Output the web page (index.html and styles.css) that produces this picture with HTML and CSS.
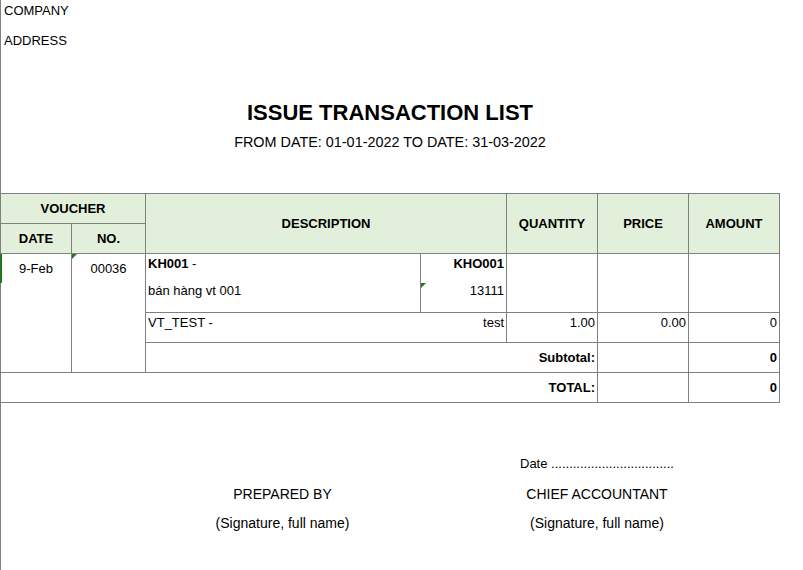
FILE: index.html
```html
<!DOCTYPE html>
<html>
<head>
<meta charset="utf-8">
<link rel="stylesheet" href="styles.css">
</head>
<body>
<div class="page">
  <div class="org">COMPANY</div>
  <div class="org">ADDRESS</div>
  <h1 class="title">ISSUE TRANSACTION LIST</h1>
  <div class="period">FROM DATE: 01-01-2022 TO DATE: 31-03-2022</div>

  <table class="sheet">
    <colgroup>
      <col class="c-date"><col class="c-no"><col class="c-desc"><col class="c-code"><col class="c-num"><col class="c-num"><col class="c-num">
    </colgroup>
    <tr class="r30">
      <th colspan="2">VOUCHER</th>
      <th colspan="2" rowspan="2">DESCRIPTION</th>
      <th rowspan="2">QUANTITY</th>
      <th rowspan="2">PRICE</th>
      <th rowspan="2">AMOUNT</th>
    </tr>
    <tr class="r30">
      <th>DATE</th>
      <th>NO.</th>
    </tr>
    <tr class="r30">
      <td rowspan="4" class="center drop mark-left">9-Feb</td>
      <td rowspan="4" class="center drop tri">00036</td>
      <td class="top open-bottom"><b>KH001</b> -</td>
      <td class="top right open-bottom"><b>KHO001</b></td>
      <td rowspan="2"></td>
      <td rowspan="2"></td>
      <td rowspan="2"></td>
    </tr>
    <tr class="r29">
      <td class="top open-top">bán hàng vt 001</td>
      <td class="top right open-top tri">13111</td>
    </tr>
    <tr class="r30">
      <td colspan="2" class="top"><div class="split"><span>VT_TEST -</span><span>test</span></div></td>
      <td class="top right">1.00</td>
      <td class="top right">0.00</td>
      <td class="top right">0</td>
    </tr>
    <tr class="r30">
      <td colspan="3" class="right bold">Subtotal:</td>
      <td></td>
      <td class="right bold">0</td>
    </tr>
    <tr class="r30">
      <td colspan="5" class="right bold">TOTAL:</td>
      <td></td>
      <td class="right bold">0</td>
    </tr>
  </table>

  <div class="signs">
    <div class="sign-left">
      <div class="line"></div>
      <div class="line">PREPARED BY</div>
      <div class="line">(Signature, full name)</div>
    </div>
    <div class="sign-right">
      <div class="line date">Date ..................................</div>
      <div class="line">CHIEF ACCOUNTANT</div>
      <div class="line">(Signature, full name)</div>
    </div>
  </div>
</div>
</body>
</html>
```

FILE: styles.css
```css
html, body {
  margin: 0;
  padding: 0;
  background: #fff;
}
body {
  background: linear-gradient(#808080, #808080) 0 0 / 1px 100% no-repeat, #fff;
  min-height: 570px;
  font-family: "Liberation Sans", Arial, sans-serif;
  font-size: 13px;
  color: #000;
}
.page {
  width: 780px;
}
.org {
  height: 30px;
  line-height: 22px;
  padding-left: 4px;
}
.title {
  margin: 37px 0 0 0;
  height: 30px;
  line-height: 32px;
  font-size: 22px;
  font-weight: bold;
  text-align: center;
}
.period {
  height: 30px;
  line-height: 30px;
  font-size: 14.4px;
  text-align: center;
}
.sheet {
  margin-top: 36px;
  width: 780px;
  table-layout: fixed;
  border-collapse: collapse;
}
.c-date { width: 71px; }
.c-no { width: 74px; }
.c-desc { width: 275px; }
.c-code { width: 86px; }
.c-num { width: 91px; }
.sheet th, .sheet td {
  border: 1px solid #808080;
  padding: 0 2px;
  line-height: 15px;
  font-size: 13px;
  vertical-align: middle;
}
.sheet th {
  background: #e2efda;
  font-weight: bold;
  text-align: center;
}
.r30 > * { height: 29px; }
.r29 > * { height: 28px; }
.sheet td.top { vertical-align: top; padding-top: 2px; }
.r30 > td.top { height: 27px; }
.sheet td.drop { vertical-align: top; padding-top: 7px; }
.sheet td.open-bottom { border-bottom: none; }
.sheet td.open-top { border-top: none; padding-top: 0; }
.r29 > td.open-top { height: 29px; }
.center { text-align: center; }
.right { text-align: right; }
.bold { font-weight: bold; }
.split {
  display: flex;
  justify-content: space-between;
}
.sheet td.mark-left, .sheet td.tri { position: relative; }
.mark-left::before {
  content: "";
  position: absolute;
  left: -1px;
  top: 0;
  width: 2px;
  height: 29px;
  background: #1e7a1e;
}
.tri::before {
  content: "";
  position: absolute;
  left: 0;
  top: 0;
  border-top: 5px solid #1e7a1e;
  border-right: 5px solid transparent;
}
.signs {
  margin-top: 46px;
  display: grid;
  grid-template-columns: 145px 275px 86px 182px;
  font-size: 14px;
}
.sign-left { grid-column: 2; text-align: center; }
.sign-right { grid-column: 4; text-align: center; }
.line {
  height: 30px;
  line-height: 30px;
}
.sign-right .date { text-align: left; padding-left: 14px; font-size: 13px; }
.line + .line { height: 29px; }
```
